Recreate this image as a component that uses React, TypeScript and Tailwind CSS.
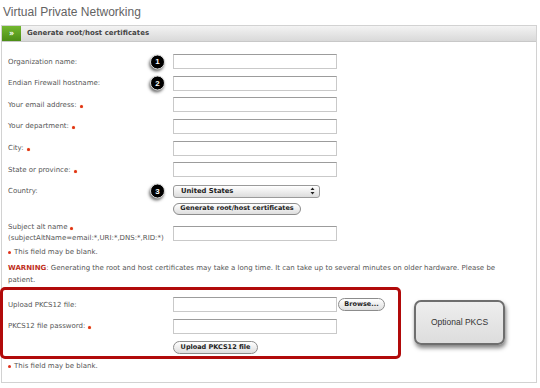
import React from "react";

const Req: React.FC = () => (
  <span className="ml-[3px] inline-block h-[3px] w-[3px] translate-y-[1px] rounded-full bg-[#e0311a] shadow-[0_0_1px_#f59a3a]" />
);

const Badge: React.FC<{ n: number }> = ({ n }) => (
  <div className="absolute left-[142px] top-1/2 flex h-[15px] w-[15px] -translate-y-1/2 items-center justify-center rounded-full border border-[#dcdcdc] bg-black font-['Liberation_Sans',Arial,sans-serif] text-[8px] font-bold text-white shadow-[-1px_2px_3px_rgba(0,0,0,0.55)]">
    {n}
  </div>
);

const TextInput: React.FC = () => (
  <div className="h-[15px] w-[164px] border border-[#c9c9c9] border-t-[#9c9c9c] bg-white" />
);

const PillButton: React.FC<{ label: string; w: string; h?: string }> = ({
  label,
  w,
  h = "h-[13px]",
}) => (
  <div
    className={`flex items-center justify-center whitespace-nowrap rounded-full border border-[#8c8c8c] bg-gradient-to-b from-white to-[#dedede] text-[6.5px] font-semibold text-[#222] ${w} ${h}`}
  >
    {label}
  </div>
);

const Row: React.FC<{
  label: string;
  required?: boolean;
  badge?: number;
  children?: React.ReactNode;
}> = ({ label, required, badge, children }) => (
  <div className="relative flex h-[21.6px] items-center">
    <div className="w-[165px] whitespace-nowrap text-[7px] text-[#555]">
      {label}
      {required && <Req />}
    </div>
    {children ?? <TextInput />}
    {badge && <Badge n={badge} />}
  </div>
);

const App: React.FC = () => {
  return (
    <div className="relative h-[388px] w-[540px] overflow-hidden bg-white font-['DejaVu_Sans',Verdana,sans-serif]">
      <h1 className="pl-[3px] pt-[5px] font-['Liberation_Sans',Arial,sans-serif] text-[12px] leading-[14px] text-[#636363]">
        Virtual Private Networking
      </h1>

      <div className="ml-[1px] mt-[6px] h-[358px] w-[536px] border border-[#d2d2d2]">
        {/* header */}
        <div className="flex h-[16px] items-center border-b border-[#c8c8c8] bg-gradient-to-b from-[#f3f3f3] to-[#d9d9d9]">
          <div className="flex h-full w-[19px] items-center justify-center bg-gradient-to-b from-[#73b82f] to-[#4c8d16] text-[8px] font-bold leading-none text-white">
            »
          </div>
          <span className="pl-[6px] text-[7px] font-bold text-[#444]">
            Generate root/host certificates
          </span>
        </div>

        <div className="pl-[6px] pt-[9px]">
          <Row label="Organization name:" badge={1} />
          <Row label="Endian Firewall hostname:" badge={2} />
          <Row label="Your email address:" required />
          <Row label="Your department:" required />
          <Row label="City:" required />
          <Row label="State or province:" required />
          <Row label="Country:" badge={3}>
            <div className="flex h-[13px] w-[147px] items-center justify-between rounded-[3px] border border-[#9a9a9a] bg-gradient-to-b from-white to-[#dcdcdc] pl-[7px] pr-[4px] text-[6.8px] font-semibold text-[#222]">
              United States
              <svg width="5" height="8" viewBox="0 0 5 8">
                <path d="M2.5 0.5 L4.5 3 H0.5 Z M2.5 7.5 L4.5 5 H0.5 Z" fill="#222" />
              </svg>
            </div>
          </Row>

          <div className="ml-[165px] mt-[1px]">
            <PillButton label="Generate root/host certificates" w="w-[128px]" h="h-[12px]" />
          </div>

          <div className="mt-[7px] flex items-center">
            <div className="w-[165px] whitespace-nowrap text-[7px] leading-[11px] text-[#555]">
              <div>
                Subject alt name
                <Req />
              </div>
              <div>(subjectAltName=email:*,URI:*,DNS:*,RID:*)</div>
            </div>
            <TextInput />
          </div>

          <p className="mt-[3px] text-[7px] leading-[11px] text-[#555]">
            <span className="mr-[3px] inline-block h-[3px] w-[3px] rounded-full bg-[#e0311a]" />
            This field may be blank.
          </p>

          <div className="mt-[5px] whitespace-nowrap text-[7px] leading-[11.5px] text-[#555]">
            <div>
              <span className="font-bold text-[#c0301c]">WARNING</span>
              <span>
                : Generating the root and host certificates may take a long time. It can take up
                to several minutes on older hardware. Please be
              </span>
            </div>
            <div>patient.</div>
          </div>

          <div className="mt-[1px] flex items-start">
            <div className="-ml-[8px] w-[401px] rounded-[5px] border-[3px] border-[#b10a0a] pb-[2px] pl-[5px] pt-[4px]">
              <Row label="Upload PKCS12 file:">
                <TextInput />
                <div className="ml-[1px]">
                  <PillButton label="Browse..." w="w-[47px]" />
                </div>
              </Row>
              <Row label="PKCS12 file password:" required />
              <div className="ml-[165px] mt-[4px]">
                <PillButton label="Upload PKCS12 file" w="w-[85px]" />
              </div>
            </div>

            <div className="ml-[13px] mt-[13px] flex h-[45px] w-[91px] items-center justify-center rounded-[7px] border-2 border-[#6e6e6e] bg-gradient-to-b from-[#eeeeee] to-[#dddddd] font-['Liberation_Sans',Arial,sans-serif] text-[8.5px] text-[#333] shadow-[1px_3px_4px_rgba(0,0,0,0.5)]">
              Optional PKCS
            </div>
          </div>

          <p className="mt-[1.5px] text-[7px] leading-[11px] text-[#555]">
            <span className="mr-[3px] inline-block h-[3px] w-[3px] rounded-full bg-[#e0311a]" />
            This field may be blank.
          </p>
        </div>
      </div>
    </div>
  );
};

export default App;
